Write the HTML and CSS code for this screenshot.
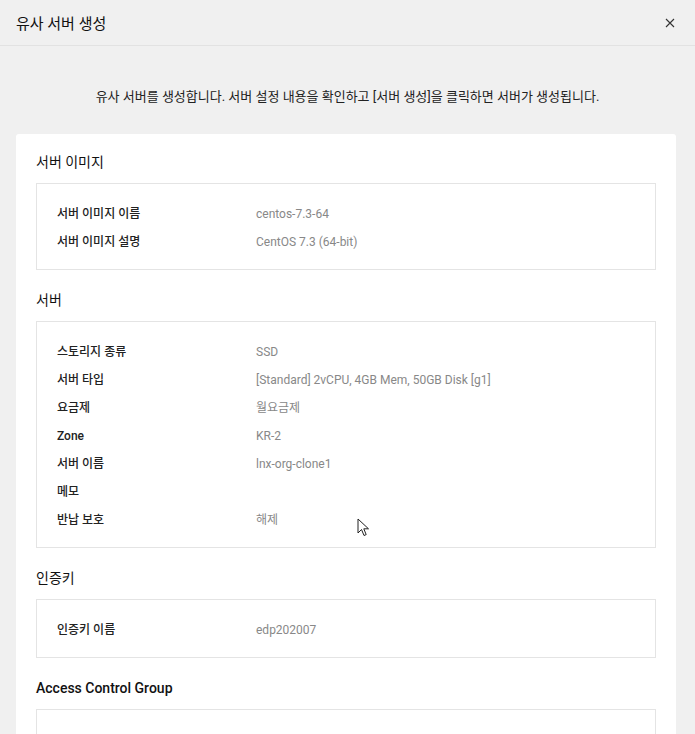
FILE: index.html
```html
<!DOCTYPE html>
<html lang="ko">
<head>
  <meta charset="UTF-8" />
  <meta name="viewport" content="width=device-width, initial-scale=1.0"/>
  <title>유사 서버 생성</title>
  <link rel="stylesheet" href="styles.css">
</head>
<body>
  <div class="modal">
    <div class="modal-header">
      <h1 class="modal-title">유사 서버 생성</h1>
      <button class="close-btn" aria-label="닫기">
        <svg width="10" height="10" viewBox="0 0 10 10">
          <path d="M1 1 L9 9 M9 1 L1 9" stroke="#333" stroke-width="1.1" fill="none"/>
        </svg>
      </button>
    </div>

    <p class="intro">유사 서버를 생성합니다. 서버 설정 내용을 확인하고 [서버 생성]을 클릭하면 서버가 생성됩니다.</p>

    <div class="panel">
      <h2 class="section-title">서버 이미지</h2>
      <div class="info-box">
        <div class="row"><span class="label">서버 이미지 이름</span><span class="value">centos-7.3-64</span></div>
        <div class="row"><span class="label">서버 이미지 설명</span><span class="value">CentOS 7.3 (64-bit)</span></div>
      </div>

      <h2 class="section-title">서버</h2>
      <div class="info-box">
        <div class="row"><span class="label">스토리지 종류</span><span class="value">SSD</span></div>
        <div class="row"><span class="label">서버 타입</span><span class="value">[Standard] 2vCPU, 4GB Mem, 50GB Disk [g1]</span></div>
        <div class="row"><span class="label">요금제</span><span class="value">월요금제</span></div>
        <div class="row"><span class="label">Zone</span><span class="value">KR-2</span></div>
        <div class="row"><span class="label">서버 이름</span><span class="value">lnx-org-clone1</span></div>
        <div class="row"><span class="label">메모</span><span class="value"></span></div>
        <div class="row"><span class="label">반납 보호</span><span class="value">해제</span></div>
      </div>

      <h2 class="section-title">인증키</h2>
      <div class="info-box">
        <div class="row"><span class="label">인증키 이름</span><span class="value">edp202007</span></div>
      </div>

      <h2 class="section-title latin">Access Control Group</h2>
      <div class="info-box">
        <div class="row"><span class="label"></span><span class="value"></span></div>
      </div>
    </div>
  </div>

  <!-- mouse pointer captured in the screenshot -->
  <svg class="cursor" width="13" height="20" viewBox="0 0 13 20">
    <path d="M1 1 L1 15 L4.5 11.5 L7 17.5 L9.2 16.6 L6.8 10.8 L11.5 10.8 Z" fill="#fff" stroke="#222" stroke-width="1" stroke-linejoin="round"/>
  </svg>
</body>
</html>
```

FILE: styles.css
```css
body {
  margin: 0;
  background: #f0f0f0;
  color: #222;
  font-family: Roboto, "Noto Sans CJK KR", sans-serif;
  height: 734px;
  overflow: hidden;
  position: relative;
}

.modal {
  width: 695px;
}

.modal-header {
  height: 46px;
  display: flex;
  align-items: center;
  justify-content: space-between;
  padding: 0 20px 0 16px;
  border-bottom: 1px solid #e2e2e2;
  box-sizing: border-box;
}

.modal-title {
  margin: 0;
  font-size: 15px;
  font-weight: 400;
  color: #111;
}

.close-btn {
  border: none;
  background: none;
  padding: 0;
  display: flex;
  cursor: pointer;
}

.intro {
  margin: 0;
  padding: 42px 0 28px;
  text-align: center;
  font-size: 13px;
  line-height: 18px;
  color: #222;
}

.panel {
  background: #fff;
  margin: 0 19px 0 16px;
  border-radius: 3px 3px 0 0;
  padding: 18px 20px 40px;
}

.section-title {
  margin: 0 0 11px;
  font-size: 14px;
  font-weight: 400;
  line-height: 20px;
  color: #111;
}

.section-title.latin {
  font-weight: 500;
}

.info-box {
  border: 1px solid #e4e4e4;
  padding: 16px 20px 13px;
  margin-bottom: 20px;
}

.row {
  display: flex;
  font-size: 12px;
  line-height: 28px;
  min-height: 28px;
}

.label {
  width: 199px;
  flex-shrink: 0;
  font-weight: 500;
  color: #222;
}

.value {
  color: #888;
}

.cursor {
  position: absolute;
  left: 357px;
  top: 518px;
}
```
